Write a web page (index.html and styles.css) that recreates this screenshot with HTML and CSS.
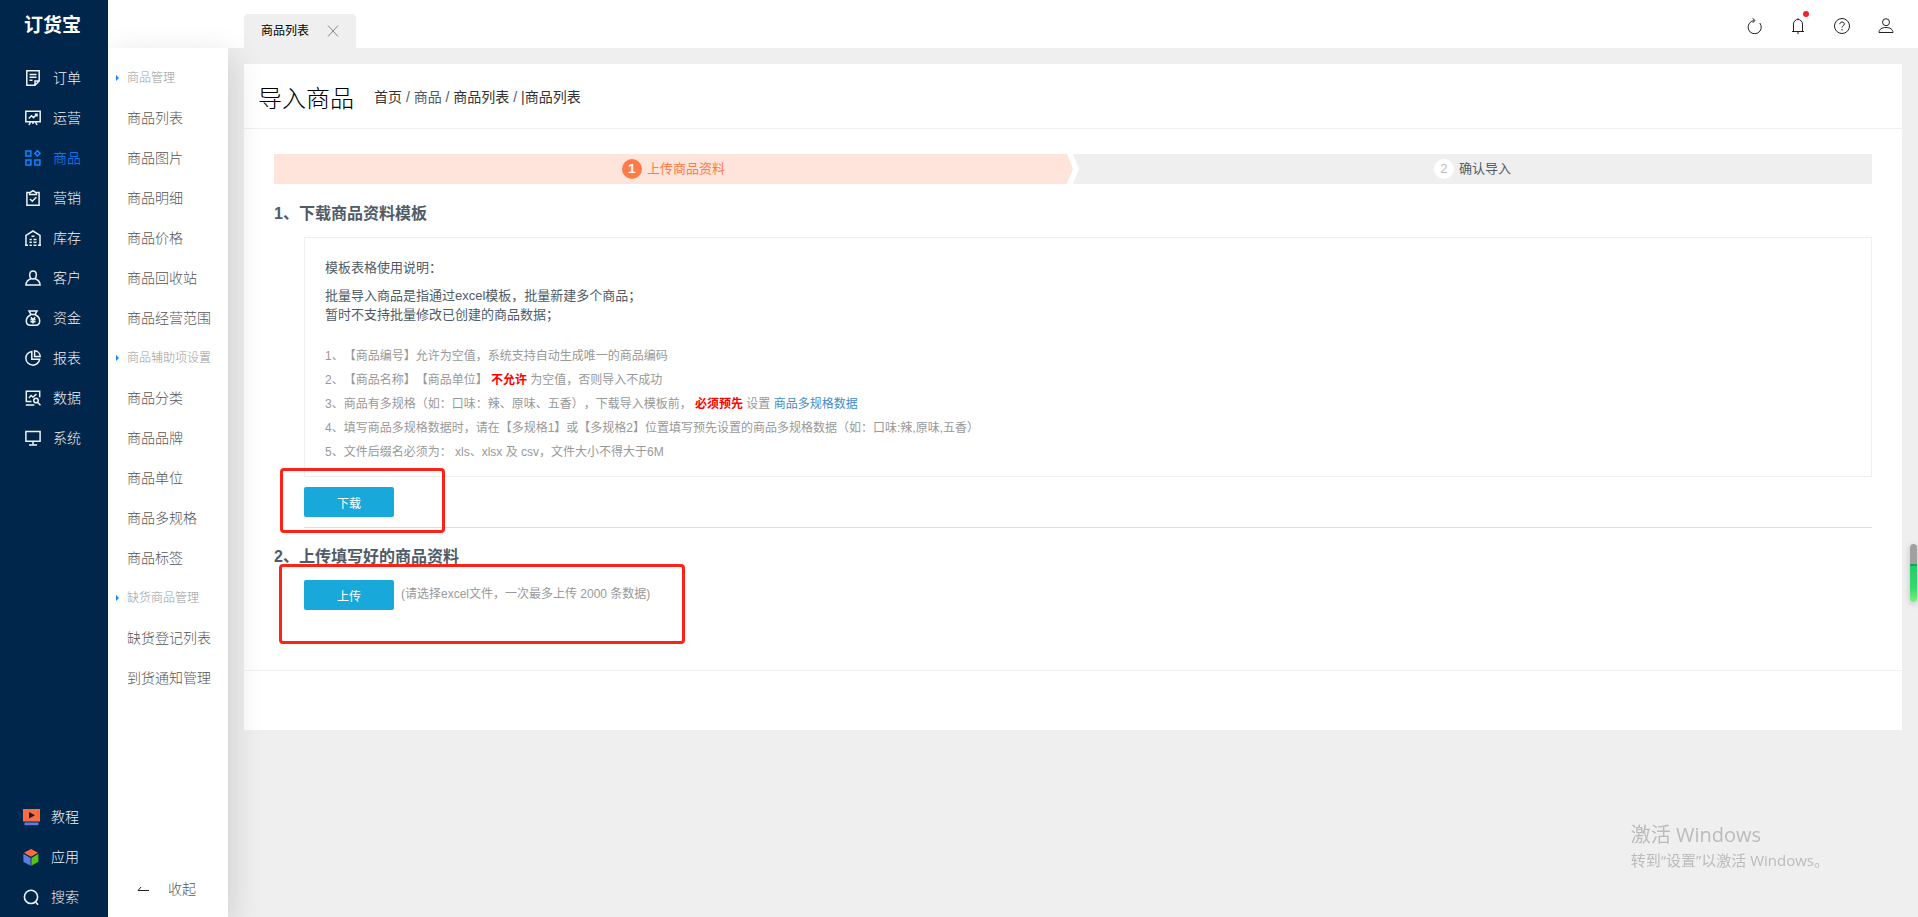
FILE: index.html
```html
<!DOCTYPE html>
<html lang="zh-CN">
<head>
  <meta charset="UTF-8">
  <meta name="viewport" content="width=device-width, initial-scale=1.0">
  <title>导入商品</title>
  <link rel="stylesheet" href="styles.css">
</head>
<body>

  <nav class="nav">
    <a class="logo" href="#">订货宝</a>
    <ul class="nav-list">
      <li><a href="#">
        <svg class="icon" viewBox="0 0 16 16"><path d="M10 15.2H1.8V.8h12.4V11zM10 15.2V11h4.2M4.5 4.5h7M4.5 7.3h7M4.5 10.2h3"/></svg>
        订单</a></li>
      <li><a href="#">
        <svg class="icon" viewBox="0 0 16 16"><path d="M.8 1.3h14.4v10.4H.8zM3.8 8.5l2.7-2.7 2 1.8 3.5-3.4M12 6.5V4.2H9.8M5.5 12l-1.5 3M10.5 12l1.5 3M8 12v2"/></svg>
        运营</a></li>
      <li><a class="active" href="#">
        <svg class="icon" viewBox="0 0 16 16"><path d="M.9.9h5v5h-5zM.9 9.9h5v5h-5zM9.900 9.900h5v5h-5zM12.400.8l2.600 2.600-2.600 2.600-2.600-2.600z"/></svg>
        商品</a></li>
      <li><a href="#">
        <svg class="icon" viewBox="0 0 16 16"><path d="M4.5 2.5H1.9v12.7h12.2V2.5h-2.6M4.6 4.6V3L8 .6 11.4 3v1.6zM5 9l2.3 2.3L11.3 7.3"/></svg>
        营销</a></li>
      <li><a href="#">
        <svg class="icon" viewBox="0 0 16 16"><path d="M1 15.5V5.3L8 1l7 4.3v10.2M0 15.2h3M13 15.2h3M6.5 6.2h3M4.5 9.5h2.3M8.5 9.5h3M4.5 12.3h2.3M8.5 12.3h3M4.5 15.2h2.3M8.5 15.2h3"/></svg>
        库存</a></li>
      <li><a href="#">
        <svg class="icon" viewBox="0 0 16 16"><path d="M8 .9c2 0 3.3 1.5 3.3 3.8S10 9 8 9 4.700 7 4.700 4.700 6 .9 8 .9zM5.800 8.800C3 9.800 1 11.800.9 15.100h14.200C15 11.800 13 9.800 10.200 8.800"/></svg>
        客户</a></li>
      <li><a href="#">
        <svg class="icon" viewBox="0 0 16 16"><path d="M4 .9h8l-2 3.600H6zM6 4.500C3 6 1.300 8.500 1.300 11c0 2.700 1.700 4.200 4 4.200h5.400c2.300 0 4-1.500 4-4.200 0-2.500-1.700-5-4.700-6.500M5.800 7.200L8 9.600l2.200-2.400M5.500 9.800h5M5.500 11.700h5M8 9.600v4"/></svg>
        资金</a></li>
      <li><a href="#">
        <svg class="icon" viewBox="0 0 16 16"><path d="M6.800 1.400a6.900 6.900 0 1 0 7.800 7.900H6.800zM9.600.8v5.600h5.600A6 6 0 0 0 9.600.8z"/></svg>
        报表</a></li>
      <li><a href="#">
        <svg class="icon" viewBox="0 0 16 16"><path d="M6.500 11.500H1.300V1.200h13.400v6M0.800 14.900h8.500M4 8l2-2.500 2 1.500 3.500-3M13.300 10.500a2.300 2.300 0 1 1-4.600 0 2.300 2.300 0 0 1 4.600 0zM12.500 12.200l3 3"/></svg>
        数据</a></li>
      <li><a href="#">
        <svg class="icon" viewBox="0 0 16 16"><path d="M.9 1.400h14.200v9.800H.9zM8 11.200v3.600M4 14.900h8"/></svg>
        系统</a></li>
    </ul>
    <ul class="nav-list nav-bottom">
      <li><a href="#">
        <svg class="icon-color" viewBox="0 0 17 17"><path fill="#ff6b3d" d="M0 0h17v12.500H0z"/><path fill="#00264b" d="M6 3l6 3.300-6 3.300z"/><path fill="#5b7fe0" d="M1.500 13.500h14v2.700h-14z"/></svg>
        教程</a></li>
      <li><a href="#">
        <svg class="icon-color" viewBox="0 0 17 17"><path fill="#ff6b3d" d="M8 0l7 3.800-7 4-7-4z"/><path fill="#5b7fe0" d="M.4 4.800l7.200 4.100v7.900L.4 12.800z"/><path fill="#52c41a" d="M15.400 4.800L8.400 8.900v7.900l7-4z"/></svg>
        应用</a></li>
      <li><a href="#">
        <svg class="icon-color search" viewBox="0 0 17 17"><path d="M14.600 7.900a6.600 6.600 0 1 1-13.200 0 6.600 6.600 0 0 1 13.200 0zM12 12.300l3 3.400"/></svg>
        搜索</a></li>
    </ul>
  </nav>

  <div class="page">
    <header class="topbar">
      <div class="tab">
        <a href="#">商品列表</a>
        <button class="tab-close" type="button" aria-label="关闭">
          <svg viewBox="0 0 12 12"><path d="M1 .5l10 11M11 .5l-10 11"/></svg>
        </button>
      </div>
      <div class="tools">
        <button type="button" aria-label="刷新">
          <svg viewBox="0 0 16 16"><path d="M13.800 5A6.600 6.600 0 1 1 8 2.600M6.500.3l2.500 2.200-2.200 2.300"/></svg>
        </button>
        <button type="button" aria-label="消息">
          <svg viewBox="0 0 16 16"><path d="M3.500 13.500V6a4.500 4.500 0 0 1 9 0v7.500M2 13.500h12M8 .2v1.300"/><path d="M7 15h2"/></svg>
          <span class="dot"></span>
        </button>
        <button type="button" aria-label="帮助">
          <svg viewBox="0 0 16 16"><circle cx="8" cy="8" r="7.500"/><path d="M5.800 6.200c0-3 4.500-2.800 4.500-.2 0 1.700-2.300 1.700-2.300 3.600M8 11v1.400"/></svg>
        </button>
        <button type="button" aria-label="用户">
          <svg viewBox="0 0 16 16"><circle cx="8" cy="4.200" r="3.500"/><path d="M1 14.500c.2-3.300 2.800-5 7-5s6.800 1.700 7 5z"/></svg>
        </button>
      </div>
    </header>

    <div class="content">
      <aside class="submenu">
        <h2>商品管理</h2>
        <a href="#">商品列表</a>
        <a href="#">商品图片</a>
        <a href="#">商品明细</a>
        <a href="#">商品价格</a>
        <a href="#">商品回收站</a>
        <a href="#">商品经营范围</a>
        <h2>商品辅助项设置</h2>
        <a href="#">商品分类</a>
        <a href="#">商品品牌</a>
        <a href="#">商品单位</a>
        <a href="#">商品多规格</a>
        <a href="#">商品标签</a>
        <h2>缺货商品管理</h2>
        <a href="#">缺货登记列表</a>
        <a href="#">到货通知管理</a>
        <button class="collapse" type="button">
          <svg viewBox="0 0 12 6"><path d="M12 4.500H1L4 1"/></svg>
          收起
        </button>
      </aside>

      <main class="main">
        <section class="panel">
          <div class="panel-head">
            <h1>导入商品</h1>
            <div class="crumbs">
              <a href="#">首页</a> / <span>商品</span> / <a href="#">商品列表</a> / <a href="#">|商品列表</a>
            </div>
          </div>

          <div class="panel-body">
            <ol class="steps">
              <li class="step current"><span class="num">1</span>上传商品资料</li>
              <li class="step"><span class="num">2</span>确认导入</li>
            </ol>

            <h3>1、下载商品资料模板</h3>
            <div class="indent">
              <div class="notice">
                <p>模板表格使用说明：</p>
                <p>批量导入商品是指通过excel模板，批量新建多个商品；<br>暂时不支持批量修改已创建的商品数据；</p>
                <ul>
                  <li>1、【商品编号】允许为空值，系统支持自动生成唯一的商品编码</li>
                  <li>2、【商品名称】【商品单位】 <strong>不允许</strong> 为空值，否则导入不成功</li>
                  <li>3、商品有多规格（如：口味：辣、原味、五香），下载导入模板前， <strong>必须预先</strong> 设置 <a href="#">商品多规格数据</a></li>
                  <li>4、填写商品多规格数据时，请在【多规格1】或【多规格2】位置填写预先设置的商品多规格数据（如：口味:辣,原味,五香）</li>
                  <li>5、文件后缀名必须为： xls、xlsx 及 csv，文件大小不得大于6M</li>
                </ul>
              </div>
              <div class="action download">
                <button class="btn" type="button">下载</button>
                <span class="mark mark-download"></span>
              </div>
            </div>

            <h3>2、上传填写好的商品资料</h3>
            <div class="indent">
              <div class="action">
                <button class="btn" type="button">上传</button>
                <span class="tip">(请选择excel文件，一次最多上传 2000 条数据)</span>
                <span class="mark mark-upload"></span>
              </div>
            </div>
          </div>

          <div class="panel-foot"></div>
        </section>
      </main>
    </div>
  </div>

  <div class="float-bar"></div>
  <div class="watermark">
    <p class="big">激活 Windows</p>
    <p>转到“设置”以激活 Windows。</p>
  </div>

</body>
</html>
```
FILE: styles.css
```css
* {
  box-sizing: border-box;
}

body {
  margin: 0;
  min-height: 100vh;
  display: flex;
  font-family: "Liberation Sans", "Noto Sans CJK SC", sans-serif;
  font-size: 14px;
  color: #4f5b66;
  background: #efefef;
  text-spacing-trim: space-all;
}

h1, h2, h3, p, ul, ol {
  margin: 0;
  padding: 0;
}

ul, ol {
  list-style: none;
}

a {
  color: inherit;
  text-decoration: none;
}

button {
  padding: 0;
  border: none;
  background: none;
  font-family: inherit;
  cursor: pointer;
}

svg {
  fill: none;
  stroke: currentColor;
}

/* Left navigation */
.nav {
  width: 108px;
  flex-shrink: 0;
  display: flex;
  flex-direction: column;
  background: #00264b;
  color: #f0f2f5;
}

.logo {
  height: 58px;
  padding: 10px 0 0 24px;
  font-family: "Noto Sans CJK SC", sans-serif;
  font-size: 19px;
  font-weight: bold;
  line-height: 27px;
  color: #fff;
}

.nav-list a {
  height: 40px;
  padding-left: 25px;
  display: flex;
  align-items: center;
  gap: 12px;
  font-weight: 300;
  line-height: 40px;
}

.nav-list a:hover,
.nav-list .active {
  color: #1384ff;
}

.nav-bottom {
  margin-top: auto;
}

.nav-bottom a {
  padding-left: 23px;
  gap: 11px;
}

.icon {
  width: 16px;
  height: 16px;
  stroke-width: 1.5;
}

.icon-color {
  width: 17px;
  height: 17px;
  stroke: none;
}

.search {
  stroke: currentColor;
  stroke-width: 1.6;
}

/* Top bar */
.page {
  flex: 1;
  min-width: 0;
  display: flex;
  flex-direction: column;
}

.topbar {
  height: 48px;
  padding: 0 10px 0 136px;
  display: flex;
  justify-content: space-between;
  align-items: flex-end;
  background: #fff;
}

.tab {
  height: 34px;
  padding: 0 17px;
  display: flex;
  align-items: center;
  gap: 18px;
  border-radius: 4px 4px 0 0;
  background: #efefef;
  font-size: 12px;
  line-height: 34px;
  color: #000;
}

.tab-close {
  width: 12px;
  height: 12px;
  color: #888;
}

.tab-close svg {
  display: block;
}

.tools {
  display: flex;
  color: #222;
}

.tools button {
  position: relative;
  width: 44px;
  height: 44px;
  color: inherit;
}

.tools svg {
  width: 16px;
  height: 16px;
  vertical-align: middle;
}

.dot {
  position: absolute;
  top: 7px;
  right: 11px;
  width: 6px;
  height: 6px;
  border-radius: 50%;
  background: #f5222d;
}

/* Second level menu */
.content {
  flex: 1;
  display: flex;
}

.submenu {
  position: relative;
  z-index: 1;
  width: 120px;
  flex-shrink: 0;
  padding: 10px 0 8px;
  display: flex;
  flex-direction: column;
  background: #fff;
  box-shadow: 4px 8px 32px rgba(0, 0, 0, 0.14);
  clip-path: inset(-48px -48px 0 0);
  color: #555;
  font-weight: 300;
}

.submenu h2,
.submenu a {
  height: 40px;
  padding-left: 19px;
  line-height: 40px;
}

.submenu h2 {
  display: flex;
  align-items: center;
  gap: 8px;
  padding-left: 8px;
  font-size: 12px;
  font-weight: 300;
  color: #999;
}

.submenu h2::before {
  content: "";
  border: 3px solid transparent;
  border-left-color: #1384ff;
  border-right: none;
}

.submenu a:hover {
  color: #1384ff;
}

.collapse {
  height: 40px;
  margin-top: auto;
  padding-left: 29px;
  display: flex;
  align-items: center;
  gap: 19px;
  font-size: 14px;
  font-weight: 300;
  line-height: 40px;
  color: #555;
}

.collapse svg {
  width: 12px;
  height: 6px;
  color: #222;
}

/* Main panel */
.main {
  flex: 1;
  min-width: 0;
  padding: 16px;
}

.panel {
  background: #fff;
}

.panel-head {
  height: 65px;
  padding: 0 14px;
  display: flex;
  align-items: center;
  gap: 20px;
  border-bottom: 1px solid #efefef;
}

.panel-head h1 {
  font-size: 24px;
  font-weight: 300;
  color: #000;
}

.crumbs a {
  color: #333;
}

.panel-body {
  padding: 25px 30px 60px;
}

.steps {
  display: grid;
  grid-template-columns: 1fr 1fr;
  margin-bottom: 1px;
}

.step {
  height: 30px;
  display: flex;
  justify-content: center;
  align-items: center;
  gap: 5px;
  background: #efefef;
  font-size: 13px;
  line-height: 28px;
  clip-path: polygon(0 0, 100% 0, 100% 100%, 0 100%, 6px 50%);
}

.step.current {
  background: #ffe4db;
  color: #ff7b47;
  clip-path: polygon(0 0, calc(100% - 6px) 0, 100% 50%, calc(100% - 6px) 100%, 0 100%);
}

.num {
  width: 20px;
  height: 20px;
  border-radius: 50%;
  background: #fff;
  color: #bbb;
  text-align: center;
  line-height: 20px;
}

.current .num {
  background: #ff7b47;
  color: #fff;
  font-weight: bold;
}

h3 {
  padding: 17px 0 11px;
  font-size: 16px;
  line-height: 24px;
}

.indent {
  padding-left: 30px;
}

.notice {
  padding: 20px 20px 12px;
  border: 1px solid #efefef;
  font-size: 13px;
  line-height: 19px;
}

.notice p {
  margin-bottom: 9px;
}

.notice ul {
  padding-top: 11px;
  font-size: 12px;
  line-height: 24px;
  color: #999;
}

.notice strong {
  color: #f00;
}

.notice li a {
  color: #428bca;
}

.action {
  position: relative;
  display: flex;
  gap: 7px;
}

.download {
  padding: 10px 0;
  border-bottom: 1px solid #ddd;
}

.btn {
  width: 90px;
  height: 30px;
  border-radius: 2px;
  background: #18a9da;
  font-size: 12px;
  color: #fff;
}

.tip {
  font-size: 12px;
  line-height: 28px;
  color: #999;
}

/* Highlight frames over the two buttons */
.mark {
  position: absolute;
  border: 3px solid #ff2216;
  border-radius: 4px;
  pointer-events: none;
}

.mark-download {
  top: -9px;
  left: -24px;
  width: 165px;
  height: 65px;
}

.mark-upload {
  top: -16px;
  left: -25px;
  width: 406px;
  height: 80px;
}

.panel-foot {
  height: 60px;
  border-top: 1px solid #f3f3f3;
}

/* Floating items */
.float-bar {
  position: fixed;
  top: 544px;
  right: 1px;
  width: 7px;
  height: 58px;
  border-radius: 4px;
  background: linear-gradient(#a0a0a0 20px, #12a853 20px, #12a853 22px, #26cc6c 22px, #36d870 44px, #7bf07b);
  box-shadow: 0 2px 6px rgba(0, 0, 0, 0.2);
}

.watermark {
  position: fixed;
  right: 89px;
  bottom: 46px;
  font-family: "Open Sans", "Noto Sans CJK SC", sans-serif;
  font-size: 15px;
  line-height: 22px;
  color: #bbb;
}

.watermark .big {
  font-size: 20px;
  line-height: 28px;
}
```
